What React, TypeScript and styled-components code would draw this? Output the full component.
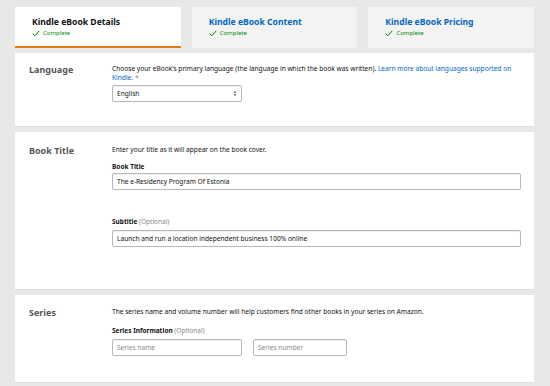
import React from "react";
import styled, { createGlobalStyle } from "styled-components";

const Global = createGlobalStyle`
  html, body { margin: 0; padding: 0; }
  body {
    background: #e8e8e8;
    font-family: "Noto Sans", "Open Sans", Arial, sans-serif;
    color: #111;
    width: 550px;
    height: 386px;
    overflow: hidden;
  }
  * { box-sizing: border-box; }
`;

const Page = styled.div`
  padding: 7px 16px 0 15px;
  width: 550px;
`;

const Tabs = styled.div`
  display: flex;
  gap: 11px;
`;

const Tab = styled.div<{ $active?: boolean }>`
  flex: 1;
  height: 41px;
  background: ${(p) => (p.$active ? "#fff" : "#f3f3f3")};
  border-bottom: 2px solid ${(p) => (p.$active ? "#e47911" : "transparent")};
  padding: 9px 0 0 17px;
`;

const TabTitle = styled.div<{ $active?: boolean }>`
  font-size: 8.6px;
  font-weight: 700;
  line-height: 12px;
  color: ${(p) => (p.$active ? "#111" : "#0066c0")};
`;

const Status = styled.div`
  display: flex;
  align-items: center;
  gap: 3px;
  margin-top: 1px;
  font-size: 6px;
  line-height: 9px;
  color: #008a00;
`;

const Panels = styled.div`
  display: flex;
  flex-direction: column;
  gap: 6px;
  margin-top: 5px;
`;

const Panel = styled.section<{ $h: number; $pt: number }>`
  background: #fff;
  height: ${(p) => p.$h}px;
  padding-top: ${(p) => p.$pt}px;
  display: grid;
  grid-template-columns: 97px 1fr;
  box-shadow: 0 1px 1px rgba(0, 0, 0, 0.04);
`;

const SectionLabel = styled.h2`
  margin: 0;
  padding-left: 14px;
  font-size: 9px;
  line-height: 12px;
  font-weight: 700;
  color: #555;
`;

const Body = styled.div`
  padding-right: 13px;
`;

const Para = styled.p<{ $mt?: number }>`
  margin: ${(p) => p.$mt ?? 0}px 0 0;
  font-size: 6.6px;
  line-height: 8.8px;
  color: #111;
`;

const Link = styled.a`
  color: #0066c0;
  text-decoration: none;
`;

const Star = styled.span`
  color: #888;
  margin-left: 2px;
`;

const FieldLabel = styled.div<{ $mt: number }>`
  margin-top: ${(p) => p.$mt}px;
  font-size: 6.5px;
  line-height: 9px;
  font-weight: 700;
  color: #111;
`;

const Optional = styled.span`
  font-weight: 400;
  color: #888;
`;

const Input = styled.div<{ $w?: number; $mt: number; $placeholder?: boolean }>`
  margin-top: ${(p) => p.$mt}px;
  width: ${(p) => (p.$w ? `${p.$w}px` : "100%")};
  height: 17px;
  border: 1px solid #b9b9b9;
  border-radius: 2px;
  box-shadow: inset 0 1px 0 rgba(0, 0, 0, 0.06);
  background: #fff;
  padding: 0 4px;
  display: flex;
  align-items: center;
  font-size: 6.6px;
  color: ${(p) => (p.$placeholder ? "#8a8a8a" : "#111")};
`;

const Select = styled(Input)`
  justify-content: space-between;
  background: #fff;
`;

const InputRow = styled.div`
  display: flex;
  gap: 11px;
`;

const Check = () => (
  <svg width="8" height="7" viewBox="0 0 8 7">
    <path d="M0.8 3.8 L2.9 5.8 L7.2 0.9" fill="none" stroke="#008a00" strokeWidth="1" />
  </svg>
);

const SelectArrows = () => (
  <svg width="4" height="7" viewBox="0 0 4 7">
    <path d="M0.5 2.8 L2 0.8 L3.5 2.8 Z M0.5 4.2 L2 6.2 L3.5 4.2 Z" fill="#666" />
  </svg>
);

const tabs = [
  { title: "Kindle eBook Details", active: true },
  { title: "Kindle eBook Content", active: false },
  { title: "Kindle eBook Pricing", active: false },
];

export default function App() {
  return (
    <>
      <Global />
      <Page>
        <Tabs>
          {tabs.map((t) => (
            <Tab key={t.title} $active={t.active}>
              <TabTitle $active={t.active}>{t.title}</TabTitle>
              <Status>
                <Check />
                Complete
              </Status>
            </Tab>
          ))}
        </Tabs>
        <Panels>
          <Panel $h={73} $pt={11}>
            <SectionLabel>Language</SectionLabel>
            <Body>
              <Para $mt={1}>
                Choose your eBook's primary language (the language in which the book was written).{" "}
                <Link>Learn more about languages supported on</Link>
                <br />
                <Link>Kindle.</Link>
                <Star>*</Star>
              </Para>
              <Select $w={130} $mt={2}>
                English
                <SelectArrows />
              </Select>
            </Body>
          </Panel>
          <Panel $h={157} $pt={13}>
            <SectionLabel>Book Title</SectionLabel>
            <Body>
              <Para $mt={1}>Enter your title as it will appear on the book cover.</Para>
              <FieldLabel $mt={7}>Book Title</FieldLabel>
              <Input $mt={2}>The e-Residency Program Of Estonia</Input>
              <FieldLabel $mt={27}>
                Subtitle <Optional>(Optional)</Optional>
              </FieldLabel>
              <Input $mt={4}>Launch and run a location independent business 100% online</Input>
            </Body>
          </Panel>
          <Panel $h={87} $pt={12}>
            <SectionLabel>Series</SectionLabel>
            <Body>
              <Para $mt={1}>
                The series name and volume number will help customers find other books in your series on Amazon.
              </Para>
              <FieldLabel $mt={9}>
                Series Information <Optional>(Optional)</Optional>
              </FieldLabel>
              <InputRow>
                <Input $w={130} $mt={4} $placeholder>
                  Series name
                </Input>
                <Input $w={94} $mt={4} $placeholder>
                  Series number
                </Input>
              </InputRow>
            </Body>
          </Panel>
        </Panels>
      </Page>
    </>
  );
}
